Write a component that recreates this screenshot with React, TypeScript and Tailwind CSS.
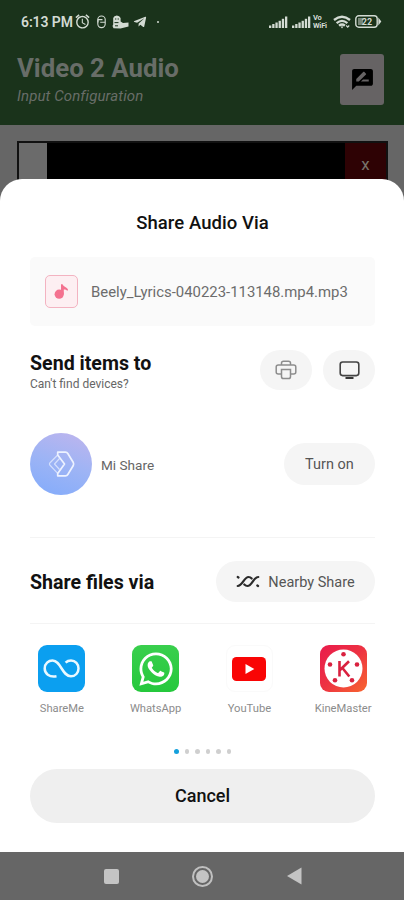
import type { ReactNode } from "react";
import { FaTelegramPlane, FaWhatsapp } from "react-icons/fa";
import { MdAlarm, MdRateReview } from "react-icons/md";

function SignalBars() {
	return (
		<svg width="19" height="12" viewBox="0 0 19 12" fill="currentColor">
			<rect x="0" y="9.5" width="2.3" height="2.5" />
			<rect x="3.2" y="8" width="2.3" height="4" />
			<rect x="6.4" y="6.5" width="2.3" height="5.5" />
			<rect x="9.6" y="4.8" width="2.3" height="7.2" />
			<rect x="12.8" y="2.8" width="2.3" height="9.2" />
			<rect x="16" y="0.5" width="2.3" height="11.5" />
		</svg>
	);
}

function StatusBar() {
	return (
		<div className="flex h-[43px] items-center pl-[21px] pr-[22px] text-[#d3dbd3]">
			<span className="w-[53px] whitespace-nowrap text-[14px] font-semibold leading-none tracking-[-0.1px]">
				6:13 PM
			</span>
			<MdAlarm className="size-[17px]" />
			<svg className="ml-[6px]" width="9" height="14" viewBox="0 0 9 14" fill="none" stroke="currentColor" strokeWidth="1.1">
				<rect x="0.8" y="1" width="7.4" height="11.6" rx="3.6" />
				<path d="M1 4.6h4.5M3.2 7.2h5M1 4.6v3" />
			</svg>
			<svg className="ml-[6px]" width="17" height="14" viewBox="0 0 17 14" fill="currentColor">
				<path d="M1.2 3Q2 .5 4.800.5T8.600 3V6.500L11 8l5.500-.5v4L8.500 13.500l-7-.3L.5 11l.7-1.500z" />
				<path d="M3 4h1.300M5.600 4h1.300M2.500 7.600h4M3 10.800h3" stroke="#1a331b" strokeWidth="1" />
			</svg>
			<FaTelegramPlane className="ml-[4px] size-[14px]" />
			<span className="ml-[10px] size-[2px] rounded-full bg-current" />

			<div className="ml-auto flex items-center">
				<SignalBars />
				<span className="ml-[4px] flex">
					<SignalBars />
				</span>
				<span className="ml-[2px] flex w-[17px] flex-col text-[7.500px] font-bold leading-[9px] tracking-[-0.2px]">
					<span className="-mb-px">Vo</span>
					<span>WiFi</span>
				</span>
				<svg className="ml-[3px]" width="18" height="14" viewBox="0 0 18 14" fill="none" stroke="currentColor" strokeWidth="2.300">
					<path d="M1 5Q9-1.600 17 5M3.600 8.100Q9 3.600 14.400 8.100M6 10.700Q9 8.400 12 10.700" />
					<path d="M7.500 11.600h3L9 13.600z" fill="currentColor" stroke="none" />
					<path d="M13.200 10.500l1.500 1.600 1.500-1.600" strokeWidth="1.200" />
				</svg>
				<svg className="ml-[4px]" width="27" height="13" viewBox="0 0 27 13">
					<rect x="0.800" y="0.800" width="21.400" height="11.400" rx="3" fill="none" stroke="currentColor" strokeWidth="1.400" />
					<rect x="3" y="3" width="5" height="7" fill="currentColor" opacity="0.500" />
					<path d="M23.300 2.500L26.300 6.500 23.300 10.500z" fill="currentColor" />
					<text x="12" y="9.700" fontSize="9" fontWeight="700" textAnchor="middle" fill="currentColor">
						22
					</text>
				</svg>
			</div>
		</div>
	);
}

function AppHeader() {
	return (
		<header className="h-[125px] bg-[#1a331b]">
			<StatusBar />
			<div className="flex items-start justify-between pl-[17px] pr-[20px]">
				<div className="pt-[10px] text-[#686d68]">
					<h1 className="text-[25.800px] font-bold leading-[30px]">Video 2 Audio</h1>
					<p className="mt-[4px] text-[15px] italic leading-[18px] tracking-[0.1px]">Input Configuration</p>
				</div>
				<div className="mt-[11px] flex h-[51px] w-[44px] items-center justify-center rounded-[3px] bg-[#666364]">
					<MdRateReview className="size-[25px] text-black" />
				</div>
			</div>
		</header>
	);
}

function SheetButton({ className, children }: { className: string; children: ReactNode }) {
	return (
		<button className={`flex items-center justify-center rounded-full bg-[#f5f5f5] ${className}`}>
			{children}
		</button>
	);
}

function ShareMeIcon() {
	return (
		<svg width="47" height="47" viewBox="0 0 47 47">
			<rect width="47" height="47" rx="9" fill="#0b9ff0" />
			<path
				d="M18.500 31.200C11 32.500 6.700 28.500 6.700 23.500C6.700 18.500 10.500 15.600 14.500 15.600C23 15.600 24 31.300 33 31.300C37.500 31.300 40.500 27.700 40.500 23.500C40.500 19.200 37.500 15.600 33 15.600C30.800 15.600 29 16.300 27.600 17.700"
				fill="none"
				stroke="#e9f8ff"
				strokeWidth="2.500"
			/>
		</svg>
	);
}

function WhatsAppIcon() {
	return (
		<div className="flex size-[47px] items-center justify-center rounded-[9px] bg-linear-to-b from-[#39cf4d] to-[#25c83c]">
			<FaWhatsapp className="size-[38px] text-white" />
		</div>
	);
}

function YouTubeIcon() {
	return (
		<div className="flex size-[47px] items-center justify-center rounded-[9px] border border-[#fafafa] bg-white">
			<svg width="34" height="24" viewBox="0 0 34 24">
				<rect width="34" height="24" rx="4.500" fill="#f90505" />
				<path d="M13.500 7L22.300 12 13.500 17z" fill="#fff" />
			</svg>
		</div>
	);
}

function KineMasterIcon() {
	return (
		<svg width="47" height="47" viewBox="0 0 47 47">
			<defs>
				<linearGradient id="kine" x1="0" y1="0" x2="1" y2="1">
					<stop offset="0" stopColor="#e91b4c" />
					<stop offset="0.500" stopColor="#ed3342" />
					<stop offset="1" stopColor="#f8662f" />
				</linearGradient>
			</defs>
			<rect width="47" height="47" rx="9" fill="url(#kine)" />
			<circle cx="23.500" cy="23.500" r="19" fill="#fff" />
			<g fill="#d9213f">
				<circle cx="23.500" cy="9.200" r="2.300" />
				<circle cx="10" cy="19.500" r="2.300" />
				<circle cx="37" cy="19.500" r="2.300" />
				<circle cx="15" cy="35.300" r="2.300" />
				<circle cx="32" cy="35.300" r="2.300" />
			</g>
			<path d="M19.500 16v15.500M29 16.200L20 25M22.200 22.800L29.300 31.500" fill="none" stroke="#d9213f" strokeWidth="2.600" />
		</svg>
	);
}

const apps = [
	{ name: "ShareMe", icon: <ShareMeIcon /> },
	{ name: "WhatsApp", icon: <WhatsAppIcon /> },
	{ name: "YouTube", icon: <YouTubeIcon /> },
	{ name: "KineMaster", icon: <KineMasterIcon /> },
];

function ShareSheet() {
	return (
		<section className="absolute inset-x-0 top-[179px] h-[673px] rounded-t-[22px] bg-white px-[30px]">
			<h2 className="pt-[33px] pl-px text-center text-[18.500px] font-medium leading-[22px] tracking-[0.06px] text-[#111]">
				Share Audio Via
			</h2>

			<div className="mt-[23px] flex h-[69px] w-[345px] items-center rounded-[5px] bg-[#fafafa] pl-[15px]">
				<div className="flex size-[33px] items-center justify-center rounded-[5px] border border-[#f3b3c1] bg-[#fdeff2]">
					<svg width="15" height="17" viewBox="0 0 15 17" fill="#f4718f">
						<circle cx="5.200" cy="11.200" r="4.600" />
						<path d="M7 11V1.200h1.500c1 2.300 3.500 2.400 5.500 5l-.6 1.800C12.300 6.800 11 6.400 9.800 6.500V11z" />
					</svg>
				</div>
				<span className="ml-[13px] mt-[2px] whitespace-nowrap text-[14.900px] text-[#6c6c6c]">
					Beely_Lyrics-040223-113148.mp4.mp3
				</span>
			</div>

			<div className="mt-[24px] flex h-[40px] w-[345px] items-center">
				<div className="mt-[5px]">
					<h3 className="text-[19.600px] font-bold leading-[24px] text-[#111]">Send items to</h3>
					<p className="text-[12px] leading-[17px] text-[#666]">Can't find devices?</p>
				</div>
				<SheetButton className="ml-auto h-[40px] w-[52px]">
					<svg width="22" height="20" viewBox="0 0 22 20" fill="none" stroke="#8d8d8d" strokeWidth="1.500">
						<path d="M6.500 5V3.200Q6.500 1.200 8.500 1.200h5Q15.500 1.200 15.500 3.200V5" />
						<path d="M6.500 14H3.300Q1.200 14 1.200 12V7Q1.200 5 3.300 5H18.700Q20.800 5 20.800 7V12Q20.800 14 18.700 14H15.500" />
						<path d="M6.500 9.500H15.500V16.500Q15.500 18.600 13.500 18.600H8.500Q6.500 18.600 6.500 16.500z" />
					</svg>
				</SheetButton>
				<SheetButton className="ml-[11px] h-[40px] w-[52px]">
					<svg width="21" height="18" viewBox="0 0 21 18" fill="none" stroke="#444" strokeWidth="1.600">
						<rect x="1.200" y="1" width="18.600" height="13.600" rx="2.500" />
						<path d="M6.500 17h8" stroke="#222" strokeWidth="1.800" />
					</svg>
				</SheetButton>
			</div>

			<div className="mt-[43px] flex h-[62px] w-[345px] items-center">
				<div className="flex size-[62px] items-center justify-center rounded-full bg-linear-[20deg] from-[#82abfb] via-[#9db4f5] to-[#c0b5ed]">
					<svg width="27" height="26" viewBox="0 0 27 26" fill="none" stroke="#edf2ff" strokeWidth="1.200" strokeLinejoin="round">
						<path d="M9.700 1.200H17.500Q19 1.200 19.800 2.500L25.300 11.500Q26 13 25.300 14.500L19.800 23.500Q19 24.800 17.500 24.800H9.700V22.500L16.500 13 9.700 4z" strokeWidth="1.700" />
						<path d="M9.700 4L1.800 12Q1 13 1.800 14L9.700 22.300M11.500 7.500L6.500 13l5 5.500" opacity="0.700" />
					</svg>
				</div>
				<span className="ml-[9px] mt-[2px] text-[13.600px] text-[#666]">Mi Share</span>
				<SheetButton className="ml-auto h-[42px] w-[91px] pt-[2px] text-[14.500px] text-[#555]">Turn on</SheetButton>
			</div>

			<div className="mt-[42px] h-px w-[345px] bg-[#f4f4f4]" />
			<div className="mt-[23px] flex h-[41px] w-[345px] items-center justify-between">
				<h3 className="pt-[2px] text-[19.600px] font-bold leading-[24px] text-[#111]">Share files via</h3>
				<SheetButton className="h-[41px] w-[159px] text-[14.500px] text-[#555]">
					<svg className="mr-[8px]" width="24" height="13" viewBox="0 0 24 13" fill="none" stroke="#2b2b2b" strokeWidth="2.200" strokeLinecap="round">
						<path d="M1.700 11C6.500 11 8 2 12.500 2c1.500 0 2.400.6 3.200 1.500" />
						<path d="M8.300 9.500c.9.900 1.900 1.500 3.200 1.500C16 11 17.500 2 22.300 2" />
						<path d="M1.700 2l.8.500M21.300 10.500l.8.500" />
					</svg>
					<span className="pt-[2px]">Nearby Share</span>
				</SheetButton>
			</div>
			<div className="mt-[21px] h-px w-[345px] bg-[#f4f4f4]" />

			<div className="-mx-[15px] mt-[21px] grid w-[375px] grid-cols-4">
				{apps.map((app) => (
					<div key={app.name} className="flex flex-col items-center">
						{app.icon}
						<span className="mt-[9px] text-[11.200px] leading-[16px] text-[#8c8c8c]">{app.name}</span>
					</div>
				))}
			</div>

			<div className="mt-[32px] flex w-[345px] justify-center gap-[6px]">
				<span className="size-[4.500px] rounded-full bg-[#14a0dc]" />
				{[2, 3, 4, 5, 6].map((page) => (
					<span key={page} className="size-[4.500px] rounded-full bg-[#cfcfcf]" />
				))}
			</div>

			<button className="mt-[15px] flex h-[54px] w-[345px] items-center justify-center rounded-full bg-[#efefef] text-[18px] font-medium text-[#111]">
				Cancel
			</button>
		</section>
	);
}

export default function App() {
	return (
		<div className="relative flex h-[900px] w-[404px] flex-col overflow-hidden bg-[#666] font-['Roboto',sans-serif]">
			<AppHeader />
			<main className="flex-1 px-[17px] pt-[16px]">
				<div className="flex h-[70px] w-[371px] border-2 border-[#111] bg-black">
					<div className="w-[28px] bg-[#6b6b6b]" />
					<div className="ml-auto flex h-[44px] w-[41px] items-center justify-center bg-[#2e0204] text-[17px] text-[#77736a]">
						x
					</div>
				</div>
			</main>
			<ShareSheet />
			<nav className="relative flex h-[48px] items-center bg-[#666]">
				<span className="ml-[104px] size-[15px] rounded-[2px] bg-[#c4c4c4]" />
				<span className="ml-[73px] flex size-[21px] items-center justify-center rounded-full border-2 border-[#c0c0c0]">
					<span className="size-[13px] rounded-full bg-[#c4c4c4]" />
				</span>
				<svg className="ml-[74px]" width="15" height="18" viewBox="0 0 15 18" fill="#c4c4c4">
					<path d="M0 9L14.500 0.500V17.500z" />
				</svg>
			</nav>
		</div>
	);
}
